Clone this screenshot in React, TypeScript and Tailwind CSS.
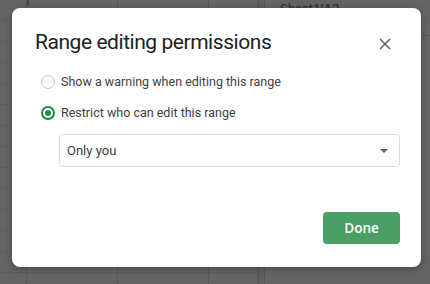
import React from 'react'

const cols = [
  { w: 'w-[27px]' },
  { w: 'w-[91px]' },
  { w: 'w-[91px]' },
  { w: 'w-[49px]' },
]

const rows = Array.from({ length: 14 })

const Radio = ({ checked, label }: { checked?: boolean; label: string }) => (
  <label className="flex items-center h-[20px] gap-[6px]">
    {checked ? (
      <span className="w-[14px] h-[14px] rounded-full border-2 border-[#1e8e3e] flex items-center justify-center">
        <span className="w-[6px] h-[6px] rounded-full bg-[#1e8e3e]" />
      </span>
    ) : (
      <span className="w-[14px] h-[14px] rounded-full border border-[#c4c4c4]" />
    )}
    <span className="text-[12.5px] text-[#3c4043]">{label}</span>
  </label>
)

const App = () => {
  return (
    <div className="relative w-[430px] h-[284px] overflow-hidden bg-[#646464] font-['Roboto',sans-serif]">
      {/* sheet behind the overlay */}
      <div className="flex h-full">
        <div className="flex h-full border-r border-[#575757]">
          {cols.map((c, i) => (
            <div key={i} className={`${c.w} h-full border-r border-[#585858] flex flex-col`}>
              {rows.map((_, j) => (
                <div key={j} className="h-[21px] shrink-0 border-b border-[#5c5c5c]" />
              ))}
            </div>
          ))}
        </div>
        <div className="w-[6px] h-full bg-[#606060] border-r border-[#585858]" />
        <div className="flex-1 h-full flex flex-col">
          <div className="h-[40px] border-b border-[#5a5a5a] pl-[15px] -mt-[4px]">
            <span className="text-[13px] leading-[16px] text-[#2a2a2a]">Sheet1!A2</span>
          </div>
        </div>
      </div>
      <div className="absolute left-[27px] top-0 w-[2px] h-[6px] bg-[#3a4a66]" />

      {/* dialog */}
      <div className="absolute left-[12px] top-[8px] w-[409px] h-[259px] rounded-[8px] bg-white shadow-[0_2px_6px_rgba(0,0,0,0.3)] flex flex-col pl-[23px] pr-[21px]">
        <div className="flex items-center justify-between pt-[19px] h-[49px]">
          <h2 className="text-[21px] leading-[28px] text-[#202124] tracking-[-0.45px]">
            Range editing permissions
          </h2>
          <svg width="12" height="12" viewBox="0 0 12 12" className="mr-[9px] mt-[3px]">
            <path d="M1 1L11 11M11 1L1 11" stroke="#5f6368" strokeWidth="1.6" />
          </svg>
        </div>
        <div className="flex flex-col gap-[11px] ml-[6px] mt-[15px]">
          <Radio label="Show a warning when editing this range" />
          <Radio checked label="Restrict who can edit this range" />
        </div>
        <div className="ml-[24px] mt-[11px] h-[33px] rounded-[4px] border border-[#dadce0] flex items-center justify-between pl-[7px] pr-[11px]">
          <span className="text-[13px] text-[#3c4043]">Only you</span>
          <svg width="8" height="4" viewBox="0 0 8 4">
            <path d="M0 0L8 0L4 4Z" fill="#5f6368" />
          </svg>
        </div>
        <div className="flex justify-end mt-[45px]">
          <button className="w-[77px] h-[32px] rounded-[4px] bg-[#4b9e66] text-white text-[13.5px] font-semibold font-['Open_Sans',sans-serif]">
            Done
          </button>
        </div>
      </div>
    </div>
  )
}

export default App
